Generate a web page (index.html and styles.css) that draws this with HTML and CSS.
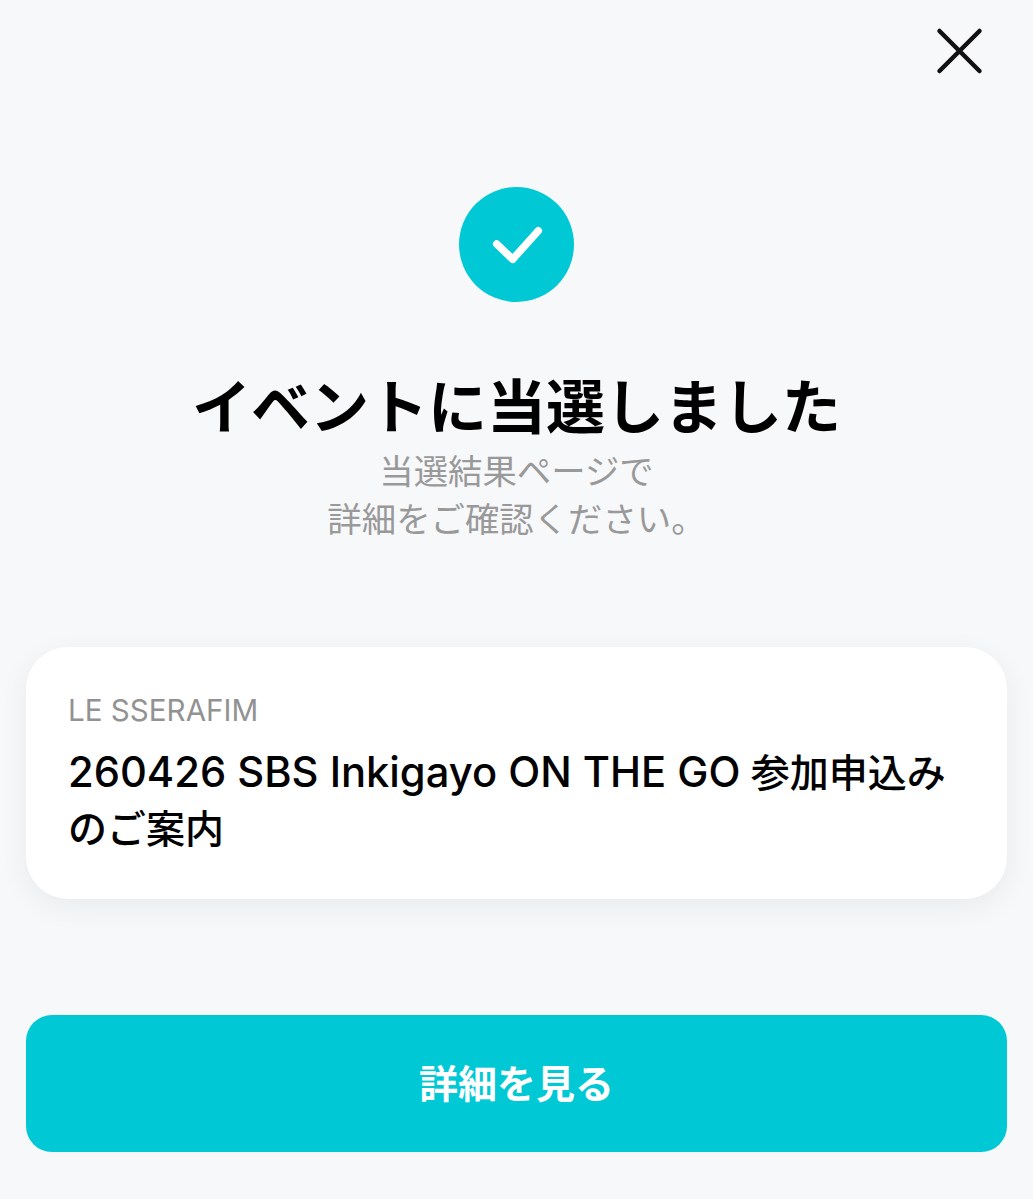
FILE: index.html
```html
<!DOCTYPE html>
<html lang="ja">
<head>
    <meta charset="UTF-8">
    <meta name="viewport" content="width=device-width, initial-scale=1.0">
    <title>イベントに当選しました</title>
    <link rel="stylesheet" href="styles.css">
</head>

<body>
    <div class="container">
        <div class="top-bar">
            <svg class="close-icon" width="50" height="50" viewBox="0 0 50 50">
                <path d="M4.5 5 L44.5 45 M44.5 5 L4.5 45" fill="none" stroke="#111" stroke-width="4.5" stroke-linecap="round"/>
            </svg>
        </div>

        <div class="result">
            <div class="check-circle">
                <svg width="54" height="42" viewBox="0 0 54 42">
                    <path d="M6.7 20 L22.7 35.3 L48.3 6.7" fill="none" stroke="#fff" stroke-width="7.5" stroke-linecap="round" stroke-linejoin="round"/>
                </svg>
            </div>
            <h1 class="title">イベントに当選しました</h1>
            <p class="sub">当選結果ページで<br>詳細をご確認ください。</p>
        </div>

        <div class="card">
            <div class="artist">LE SSERAFIM</div>
            <div class="notice"><span class="latin">260426 SBS Inkigayo ON THE GO</span> <span>参加申込み</span><span>のご案内</span></div>
        </div>

        <button class="detail-btn">詳細を見る</button>
    </div>
</body>
</html>
```

FILE: styles.css
```css
*,*::before,*::after{
    box-sizing: border-box;
}

body{
    margin: 0;
    background-color: #f7f8fa;
    font-family: Inter, "Noto Sans CJK JP", sans-serif;
}

.container{
    height: 1199px;
    padding: 0 26px;
    display: flex;
    flex-direction: column;
}

.top-bar{
    display: flex;
    justify-content: flex-end;
    padding: 26px 22px 0 0;
}

.close-icon{
    display: block;
}

.result{
    display: flex;
    flex-direction: column;
    align-items: center;
    margin-top: 111px;
}

.check-circle{
    width: 115px;
    height: 115px;
    border-radius: 50%;
    background-color: #00c8d4;
    display: flex;
    justify-content: center;
    align-items: center;
}

.title{
    margin: 68px 0 0;
    font-size: 59px;
    line-height: 76px;
    font-weight: 700;
    color: #000;
}

.sub{
    margin: 2px 0 0;
    font-size: 34.4px;
    line-height: 48px;
    color: #999;
    text-align: center;
}

.card{
    margin-top: 103px;
    height: 252px;
    padding: 43px 42px 0;
    background-color: #fff;
    border-radius: 42px;
    box-shadow: 0 8px 30px rgba(0,0,0,0.06);
}

.artist{
    font-size: 29.6px;
    line-height: 40px;
    color: #929292;
}

.notice{
    margin-top: 14px;
    font-size: 39px;
    line-height: 56px;
    font-weight: 500;
    color: #000;
}

.latin{
    font-size: 41.7px;
}

.detail-btn{
    margin-top: 116px;
    height: 137px;
    padding: 0 0 6px;
    border: none;
    border-radius: 26px;
    background-color: #00c8d4;
    color: #fff;
    font-family: inherit;
    font-size: 39px;
    font-weight: 700;
}
```
